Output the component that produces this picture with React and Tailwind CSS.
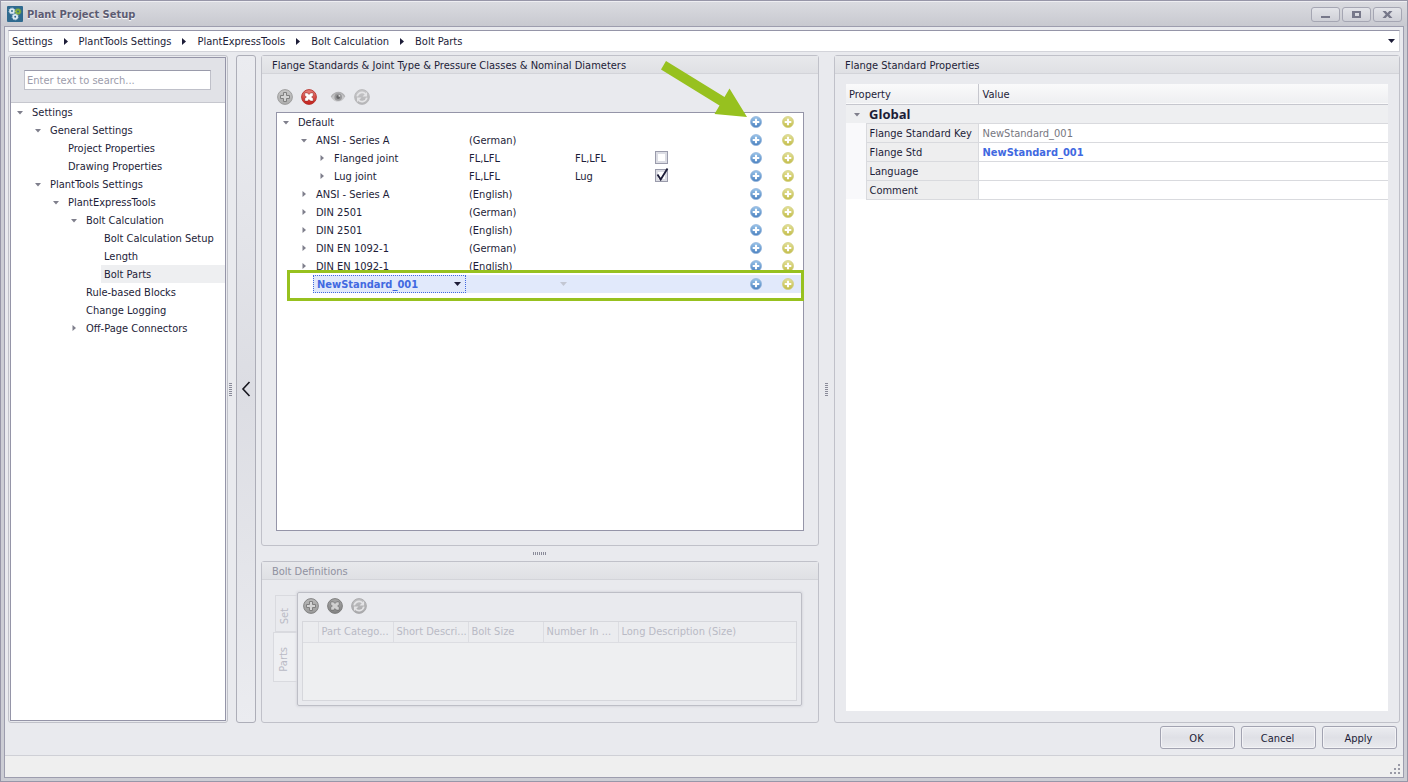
import React from "react";

function Disc({ id, size, from, to, ring, shape, mark = "#ffffff", edge = "#7a1512" }) {
  return (
    <svg width={size} height={size} viewBox="0 0 16 16" className="block shrink-0" aria-hidden="true">
      <defs>
        <linearGradient id={id} x1="0" y1="0" x2="0" y2="1">
          <stop offset="0" stopColor={from} />
          <stop offset="1" stopColor={to} />
        </linearGradient>
      </defs>
      <circle cx="8" cy="8" r="7.4" fill={`url(#${id})`} stroke={ring} strokeWidth="0.9" />
      {shape === "plus" && <path d="M6.6 3.6h2.8v3h3v2.8h-3v3H6.6v-3h-3V6.600h3z" fill={mark} />}
      {shape === "plusOutline" && (
        <path d="M6.500 3.500h3v3h3v3h-3v3h-3v-3h-3v-3h3z" fill="#d4d4d4" stroke="#808080" strokeWidth="1" />
      )}
      {shape === "cross" && (
        <path
          d="M3.800 5.400V3.900H6.400L8 5.500 9.600 3.900H12.200V6.400L10.600 8 12.200 9.600V12.100H9.600L8 10.500 6.400 12.100H3.800V9.600L5.400 8 3.800 6.400z"
          fill={mark}
          stroke={edge}
          strokeOpacity="0.6"
          strokeWidth="0.7"
        />
      )}
      {shape === "sync" && (
        <g fill="none" stroke="#e4e4e6" strokeWidth="1.700">
          <path d="M3.200 7.400a4.900 4.900 0 0 1 8.300-2.600" />
          <path d="M12.800 8.600a4.900 4.900 0 0 1-8.300 2.600" />
          <path d="M13 3v4.500H8.500zM3 13V8.500h4.500z" fill="#e4e4e6" stroke="none" />
        </g>
      )}
    </svg>
  );
}

function Eye() {
  return (
    <svg width="16" height="16" viewBox="0 0 16 16" className="block" aria-hidden="true">
      <path d="M1 8.200C3.400 4.400 6 3 8.400 3S13.400 4.600 15 8c-1.800 3-4.200 4.600-6.800 4.600S3 11.400 1 8.200z" fill="#c6c6c8" />
      <path d="M1.200 7.800C3.400 4.800 6 3.500 8.400 3.500S13.300 5 14.800 7.800" fill="none" stroke="#b0b0b2" strokeWidth="1.300" />
      <circle cx="8.200" cy="8" r="3.800" fill="#98989a" />
      <circle cx="8.200" cy="8" r="1.900" fill="#666668" />
      <circle cx="9.300" cy="6.800" r="0.900" fill="#e2e2e2" />
    </svg>
  );
}

function Logo() {
  return (
    <svg width="16" height="16" viewBox="0 0 16 16" className="block" aria-hidden="true">
      <rect width="16" height="16" rx="1" fill="#2f6a8f" />
      <g fill="none" strokeWidth="1.900">
        <circle cx="5" cy="5" r="1.900" stroke="#dbe9f2" />
        <circle cx="11" cy="5.500" r="1.900" stroke="#86b13a" />
        <circle cx="8.200" cy="10.800" r="1.900" stroke="#dbe9f2" />
      </g>
      <g fill="none" strokeWidth="0.700" strokeDasharray="1 1.100">
        <circle cx="5" cy="5" r="3.100" stroke="#dbe9f2" />
        <circle cx="11" cy="5.500" r="3.100" stroke="#86b13a" />
        <circle cx="8.200" cy="10.800" r="3.100" stroke="#dbe9f2" />
      </g>
    </svg>
  );
}

function Expander({ open, name }) {
  return (
    <button type="button" aria-label={(open ? "Collapse " : "Expand ") + name} className="flex h-[18px] w-[18px] shrink-0 items-center justify-center">
      <svg width="8" height="8" viewBox="0 0 8 8" className="block" aria-hidden="true">
        {open ? <path d="M1 3h6L4 6.500z" fill="#7f7f8c" /> : <path d="M2.500 1v6L6 4z" fill="#7f7f8c" />}
      </svg>
    </button>
  );
}

function DropArrow({ color }) {
  return (
    <svg width="7" height="4" viewBox="0 0 7 4" className="block" aria-hidden="true">
      <path d="M0 0h7L3.500 4z" fill={color} />
    </svg>
  );
}

const crumbs = ["Settings", "PlantTools Settings", "PlantExpressTools", "Bolt Calculation", "Bolt Parts"];

const indent = ["pl-0", "pl-[18px]", "pl-[36px]", "pl-[54px]", "pl-[72px]"];

/* Text sits on the lower part of its 18px row. */
const rowText = "block h-[18px] pt-[2px] leading-4";

const navTree = [
  { label: "Settings", depth: 0, open: true },
  { label: "General Settings", depth: 1, open: true },
  { label: "Project Properties", depth: 2 },
  { label: "Drawing Properties", depth: 2 },
  { label: "PlantTools Settings", depth: 1, open: true },
  { label: "PlantExpressTools", depth: 2, open: true },
  { label: "Bolt Calculation", depth: 3, open: true },
  { label: "Bolt Calculation Setup", depth: 4 },
  { label: "Length", depth: 4 },
  { label: "Bolt Parts", depth: 4, selected: true },
  { label: "Rule-based Blocks", depth: 3 },
  { label: "Change Logging", depth: 3 },
  { label: "Off-Page Connectors", depth: 3, open: false },
];

const standards = [
  { name: "Default", depth: 0, open: true },
  { name: "ANSI - Series A", depth: 1, open: true, a: "(German)" },
  { name: "Flanged joint", depth: 2, open: false, a: "FL,LFL", b: "FL,LFL", check: false },
  { name: "Lug joint", depth: 2, open: false, a: "FL,LFL", b: "Lug", check: true },
  { name: "ANSI - Series A", depth: 1, open: false, a: "(English)" },
  { name: "DIN 2501", depth: 1, open: false, a: "(German)" },
  { name: "DIN 2501", depth: 1, open: false, a: "(English)" },
  { name: "DIN EN 1092-1", depth: 1, open: false, a: "(German)" },
  { name: "DIN EN 1092-1", depth: 1, open: false, a: "(English)" },
];

const properties = [
  { key: "Flange Standard Key", value: "NewStandard_001", style: "text-[#77777f]" },
  { key: "Flange Std", value: "NewStandard_001", style: "font-bold text-[#4169e1]" },
  { key: "Language", value: "", style: "" },
  { key: "Comment", value: "", style: "" },
];

function Panel({ title, className, muted, children }) {
  return (
    <section className={"flex min-h-0 flex-col rounded-[3px] border border-[#c0c1c9] bg-[#e9eaee] " + className}>
      <h2
        className={
          "h-[18px] shrink-0 border-b border-[#d3d4d9] bg-linear-to-b from-[#e8e9ec] to-[#dfe0e4] pt-[2px] pl-[10px] leading-4 " +
          (muted ? "text-[#9091a0]" : "")
        }
      >
        {title}
      </h2>
      {children}
    </section>
  );
}

function AddButtons({ row }) {
  return (
    <>
      <td className="p-0">
        <button type="button" aria-label={"Add sibling " + row} className="mx-auto block">
          <Disc id={"blue" + row} size={12} from="#9cc6ea" to="#4a80bf" ring="#8fb2d9" shape="plus" />
        </button>
      </td>
      <td className="p-0">
        <button type="button" aria-label={"Add child " + row} className="ml-[10px] block">
          <Disc id={"gold" + row} size={12} from="#e3e09a" to="#c3bd49" ring="#d0cc7c" shape="plus" />
        </button>
      </td>
    </>
  );
}

function CheckBox({ checked, name }) {
  return (
    <label className="relative mb-px block size-[13px] border border-[#9a9bab] bg-[#dcdde4] p-[2px]">
      <input type="checkbox" defaultChecked={checked} aria-label={name} className="peer block size-[7px] appearance-none bg-white" />
      <svg viewBox="0 0 13 13" className="pointer-events-none absolute -top-[2px] left-0 hidden size-[13px] overflow-visible peer-checked:block" aria-hidden="true">
        <path d="M1.500 6.500 4.700 11.500 11.500 0.500" fill="none" stroke="#1d1d38" strokeWidth="1.800" />
      </svg>
    </label>
  );
}

function StandardsTable() {
  return (
    <div className="relative">
      <table className="w-full table-fixed border-collapse">
        <colgroup>
          <col className="w-[189px]" />
          <col className="w-[106px]" />
          <col className="w-[78px]" />
          <col className="w-[23px]" />
          <col />
          <col className="w-[32px]" />
          <col className="w-[31px]" />
        </colgroup>
        <tbody>
          {standards.map((s, i) => (
            <tr key={i} className="h-[18px]">
              <td className="p-0">
                <div className={"flex " + indent[s.depth]}>
                  <Expander open={s.open} name={s.name} />
                  <span className={rowText + " pl-[3px]"}>{s.name}</span>
                </div>
              </td>
              <td className="p-0 pl-[3px]">
                <span className={rowText}>{s.a}</span>
              </td>
              <td className="p-0 pl-[3px]">
                <span className={rowText}>{s.b}</span>
              </td>
              <td className="p-0 pl-[5px]">{s.check !== undefined && <CheckBox checked={s.check} name={s.name} />}</td>
              <td className="p-0" />
              <AddButtons row={i} />
            </tr>
          ))}
          <tr className="h-[18px] bg-[#e1e9fb]">
            <td className="bg-white p-0 pl-[36px]">
              <div className="relative h-[18px] border border-dotted border-[#4169e1] bg-[#e1e9fb]">
                <select aria-label="Flange standard" className="block h-4 w-full appearance-none bg-transparent pt-px pl-[3px] leading-[15px] font-bold text-[#4169e1]">
                  <option>NewStandard_001</option>
                </select>
                <span className="pointer-events-none absolute top-[6px] right-1">
                  <DropArrow color="#1d1d38" />
                </span>
              </div>
            </td>
            <td className="p-0">
              <div className="relative h-[18px]">
                <select aria-label="Language" className="block h-[18px] w-full appearance-none bg-transparent" />
                <span className="pointer-events-none absolute top-[7px] right-[5px]">
                  <DropArrow color="#c3c7d3" />
                </span>
              </div>
            </td>
            <td className="p-0" />
            <td className="p-0" />
            <td className="p-0" />
            <AddButtons row={9} />
          </tr>
        </tbody>
      </table>
      <div className="pointer-events-none absolute -right-px -bottom-[8px] left-[10px] h-[31px] border-3 border-[#97c11f]" />
    </div>
  );
}

function WindowButton({ label, children }) {
  return (
    <button
      type="button"
      aria-label={label}
      className="flex h-[15px] w-[29px] items-center justify-center rounded-[3px] border border-[#a5a6b3] bg-linear-to-b from-[#e3e4e9] to-[#cfd0d7]"
    >
      <svg width="11" height="9" viewBox="0 0 11 9" aria-hidden="true">
        {children}
      </svg>
    </button>
  );
}

const iconButton = "block size-4";

export default function App() {
  return (
    <div className="flex h-screen min-h-[600px] min-w-[1100px] flex-col border border-[#9796a8] bg-[#cccdd4] font-['DejaVu_Sans_Condensed','DejaVu_Sans',sans-serif] text-[11px] leading-[18px] text-[#1d1d38]">
      <header className="flex h-[25px] shrink-0 items-center border-t border-[#eeeef2] bg-linear-to-b from-[#dadbe0] to-[#c8c9d0] pr-[5px] pl-[6px]">
        <Logo />
        <h1 className={rowText + " pl-1 font-bold text-[#5c5c72] [text-shadow:0_1px_1px_#ffffff]"}>Plant Project Setup</h1>
        <div className="ml-auto flex gap-[2px]">
          <WindowButton label="Minimize">
            <path d="M1 6h9v2H1z" fill="#77788a" />
          </WindowButton>
          <WindowButton label="Maximize">
            <path d="M1 1h9v7H1zM4 3v3h4v-3z" fill="#77788a" fillRule="evenodd" />
          </WindowButton>
          <WindowButton label="Close">
            <path d="M0.500 1h3.200l1.800 1.900L7.300 1h3.200L7.300 4.500 10.500 8H7.300L5.500 6.100 3.700 8H0.500l3.200-3.500z" fill="#77788a" />
          </WindowButton>
        </div>
      </header>

      <div className="mx-[3px] mb-[3px] flex min-h-0 flex-1 flex-col border border-[#9d9dae] bg-[#e9eaee]">
        <div className="flex min-h-0 flex-1 flex-col gap-[3px] px-[3px] pt-[3px]">
          <nav aria-label="Breadcrumb" className="flex h-[22px] shrink-0 items-center border border-[#d3d4da] border-t-[#9595a8] bg-white px-[3px]">
            {crumbs.map((c, i) => (
              <React.Fragment key={c}>
                {i > 0 && (
                  <svg width="4" height="7" viewBox="0 0 4 7" className="mx-[11px]" aria-hidden="true">
                    <path d="M0 0v7l4-3.500z" fill="#1d1d38" />
                  </svg>
                )}
                <a href="#" className={rowText}>
                  {c}
                </a>
              </React.Fragment>
            ))}
            <button type="button" aria-label="Show path list" className="ml-auto flex size-4 items-center justify-end pr-px">
              <DropArrow color="#1d1d38" />
            </button>
          </nav>

          <main className="flex min-h-0 flex-1">
            <aside className="w-[220px] shrink-0 rounded-[3px] border border-[#c0c1c9] p-px">
              <div className="flex h-full flex-col border border-[#9595a8] bg-white">
                <div className="flex h-[45px] shrink-0 items-center border-b border-[#c6c7ce] bg-[#e1e2e7] pr-[14px] pl-[13px]">
                  <input
                    type="text"
                    aria-label="Search settings"
                    placeholder="Enter text to search..."
                    className="h-5 w-full min-w-0 border border-[#bfc0c9] border-t-[#9a9bab] bg-white px-[2px] placeholder:text-[#9c9cab]"
                  />
                </div>
                <ul>
                  {navTree.map((n) => (
                    <li key={n.label} className={"flex h-[18px] " + indent[n.depth]}>
                      {n.open === undefined ? <span className="w-[18px] shrink-0" /> : <Expander open={n.open} name={n.label} />}
                      <a href="#" className={rowText + " flex-1 pl-[3px] " + (n.selected ? "bg-[#eeeff1]" : "")}>
                        {n.label}
                      </a>
                    </li>
                  ))}
                </ul>
              </div>
            </aside>

            <div className="flex w-2 shrink-0 items-center justify-start pl-px">
              <svg width="3" height="13" viewBox="0 0 3 13" aria-hidden="true">
                <path d="M1.500 0v13" stroke="#8a8b99" strokeWidth="3" strokeDasharray="1 1" />
              </svg>
            </div>

            <button
              type="button"
              aria-label="Collapse navigation"
              className="flex w-5 shrink-0 items-center justify-center rounded-[3px] border border-[#adaeb8] bg-linear-to-b from-[#ebecf0] via-[#dcdde3] to-[#ebecf0]"
            >
              <svg width="10" height="16" viewBox="0 0 10 16" aria-hidden="true">
                <path d="M8.500 1 2 8 8.500 15" fill="none" stroke="#17171f" strokeWidth="1.600" />
              </svg>
            </button>

            <div className="ml-[5px] flex w-[558px] shrink-0 flex-col">
              <Panel title={"Flange Standards & Joint Type & Pressure Classes & Nominal Diameters"} className="relative flex-1 pb-[14px]">
                <div className="flex gap-2 px-[15px] pt-[15px] pb-[7px]">
                  <button type="button" aria-label="Add" className={iconButton}>
                    <Disc id="topAdd" size={16} from="#c6c6c6" to="#adadad" ring="#999999" shape="plusOutline" />
                  </button>
                  <button type="button" aria-label="Delete" className={iconButton}>
                    <Disc id="topDel" size={16} from="#e8837c" to="#c41f1a" ring="#b5322d" shape="cross" />
                  </button>
                  <button type="button" aria-label="Preview" className="ml-[5px] block size-4">
                    <Eye />
                  </button>
                  <button type="button" aria-label="Refresh" className={iconButton}>
                    <Disc id="topSync" size={16} from="#c6c6c8" to="#b4b4b6" ring="#b8b8ba" shape="sync" />
                  </button>
                </div>
                <div className="mx-[14px] min-h-0 flex-1 border border-[#9595a8] bg-white">
                  <StandardsTable />
                </div>
                <svg width="90" height="60" viewBox="0 0 90 60" className="pointer-events-none absolute top-[4px] left-[398px]" aria-hidden="true">
                  <path d="M1 9.500 6 1 64.500 37 69.500 28.500 87 57 54.500 54 59.500 45.500z" fill="#97c11f" />
                </svg>
              </Panel>

              <div className="flex h-[15px] shrink-0 items-center justify-center">
                <svg width="14" height="3" viewBox="0 0 14 3" aria-hidden="true">
                  <path d="M0 1.500h13" stroke="#8a8b99" strokeWidth="3" strokeDasharray="1 1" />
                </svg>
              </div>

              <Panel title="Bolt Definitions" muted className="h-[162px] shrink-0">
                <div className="flex flex-1 pt-3 pr-4 pb-4 pl-[11px]">
                  <div role="tablist" aria-orientation="vertical" className="flex w-6 shrink-0 flex-col items-end pt-[3px]">
                    <button type="button" role="tab" aria-selected="false" className="flex h-[37px] w-[22px] items-center justify-center border border-r-0 border-[#d9dadf] pt-[5px] pr-1 text-[#b9bac5]">
                      <span className="rotate-180 [writing-mode:vertical-rl]">Set</span>
                    </button>
                    <button type="button" role="tab" aria-selected="true" className="flex h-[50px] w-6 items-center justify-center border border-r-0 border-[#d9dadf] bg-[#eeeff2] pt-[5px] pr-1 text-[#b9bac5]">
                      <span className="rotate-180 [writing-mode:vertical-rl]">Parts</span>
                    </button>
                  </div>
                  <div role="tabpanel" className="flex flex-1 flex-col rounded-[2px] border border-[#bdbec6] p-1 shadow-[0_0_2px_1px_#d9dadf]">
                    <div className="flex gap-2 px-px pt-px pb-[7px]">
                      <button type="button" aria-label="Add part" className={iconButton}>
                        <Disc id="partAdd" size={16} from="#b9b9b9" to="#9a9a9a" ring="#7d7d7d" shape="plusOutline" />
                      </button>
                      <button type="button" aria-label="Delete part" className={iconButton}>
                        <Disc id="partDel" size={16} from="#a6a6a6" to="#828282" ring="#787878" shape="cross" mark="#d0d0d0" edge="#505050" />
                      </button>
                      <button type="button" aria-label="Refresh parts" className={iconButton}>
                        <Disc id="partSync" size={16} from="#c0c0c2" to="#a9a9ab" ring="#a8a8aa" shape="sync" />
                      </button>
                    </div>
                    <div className="flex-1 border border-[#d6d7dc] bg-[#eeeff1] text-[#b9bac5]">
                      <table className="w-full table-fixed border-collapse">
                        <thead>
                          <tr className="h-5 border-b border-[#dcdde2] bg-[#ebecef] text-left leading-[17px]">
                            <th className="w-[15px] border-r border-[#dcdde2] p-0" />
                            {["Part Catego...", "Short Descri...", "Bolt Size", "Number In ..."].map((h) => (
                              <th key={h} className="w-[75px] overflow-hidden border-r border-[#dcdde2] p-0 pl-[3px] font-normal whitespace-nowrap">
                                {h}
                              </th>
                            ))}
                            <th className="p-0 pl-[3px] font-normal">Long Description (Size)</th>
                          </tr>
                        </thead>
                      </table>
                    </div>
                  </div>
                </div>
              </Panel>
            </div>

            <div className="flex w-[15px] shrink-0 items-center justify-center">
              <svg width="3" height="13" viewBox="0 0 3 13" aria-hidden="true">
                <path d="M1.500 0v13" stroke="#8a8b99" strokeWidth="3" strokeDasharray="1 1" />
              </svg>
            </div>

            <Panel title="Flange Standard Properties" className="min-w-0 flex-1">
              <div className="mx-[11px] mt-[10px] mb-[11px] min-h-0 flex-1 bg-white">
                <table className="w-full table-fixed border-collapse">
                  <colgroup>
                    <col className="w-[20px]" />
                    <col className="w-[112px]" />
                    <col />
                  </colgroup>
                  <thead>
                    <tr className="h-[20px] border-b border-[#c6c7ce] bg-linear-to-b from-[#fafafb] to-[#eeeff1] text-left">
                      <th colSpan={2} className="border-r border-[#c6c7ce] p-0 pl-[3px] font-normal">
                        <span className={rowText}>Property</span>
                      </th>
                      <th className="p-0 pl-1 font-normal">
                        <span className={rowText}>Value</span>
                      </th>
                    </tr>
                  </thead>
                  <tbody>
                    <tr className="h-[18px] bg-[#eeeff1]">
                      <td colSpan={3} className="p-0">
                        <div className="flex items-center pl-[2px]">
                          <Expander open name="Global" />
                          <span className="pl-[3px] font-['Open_Sans',sans-serif] text-[13px] leading-[18px] font-bold">Global</span>
                        </div>
                      </td>
                    </tr>
                    {properties.map((p) => (
                      <tr key={p.key} className="h-[19px]">
                        <td className="bg-[#f9f9fb] p-0" />
                        <th className="border border-[#d9dade] bg-[#eeeeef] p-0 pl-[3px] text-left font-normal whitespace-nowrap">
                          <span className={rowText}>{p.key}</span>
                        </th>
                        <td className={"border-y border-[#d9dade] p-0 pl-1 " + p.style}>
                          <span className={rowText}>{p.value}</span>
                        </td>
                      </tr>
                    ))}
                  </tbody>
                </table>
              </div>
            </Panel>
          </main>
        </div>

        <div className="flex shrink-0 justify-end gap-[6px] pt-[3px] pr-[6px] pb-[6px]">
          {["OK", "Cancel", "Apply"].map((b) => (
            <button
              key={b}
              type="button"
              className="h-[23px] w-[75px] rounded-[3px] border border-[#a2a3b1] bg-linear-to-b from-[#ebecf0] via-[#dfe0e6] to-[#e9eaee] pt-[2px] pr-[2px] inset-shadow-[0_0_0_1px_#f3f3f6]"
            >
              {b}
            </button>
          ))}
        </div>
        <footer className="flex h-[22px] shrink-0 items-end justify-end border-t border-[#cfd0d6] bg-[#efefef] pr-[3px] pb-[3px]">
          <svg width="10" height="10" viewBox="0 0 10 10" aria-hidden="true">
            <path d="M8 0h2v2H8zM4 4h2v2H4zM8 4h2v2H8zM0 8h2v2H0zM4 8h2v2H4zM8 8h2v2H8z" fill="#9a9aa6" />
          </svg>
        </footer>
      </div>
    </div>
  );
}
